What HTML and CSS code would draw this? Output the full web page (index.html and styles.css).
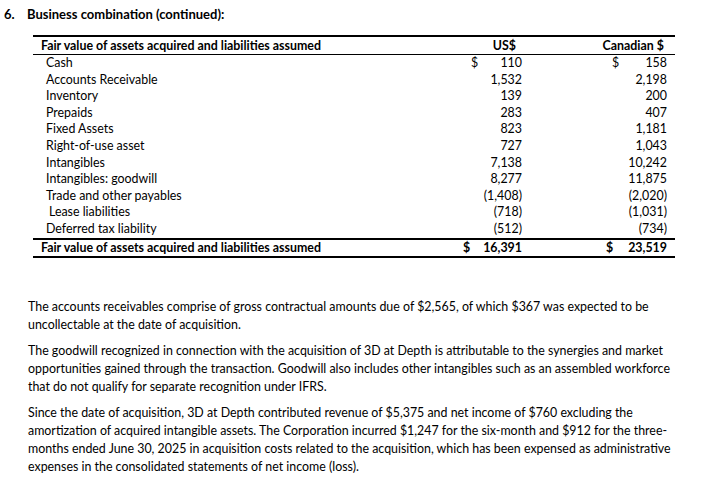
FILE: index.html
```html
<!DOCTYPE html>
<html>
<head>
<meta charset="utf-8">
<link rel="stylesheet" href="styles.css">
</head>
<body>
<div class="page">
  <h1 class="title"><span class="num">6.</span><span>Business combination (continued):</span></h1>
  <div class="table">
    <div class="row head">
      <div class="label">Fair value of assets acquired and liabilities assumed</div>
      <div class="hcell us">US$</div>
      <div class="hcell ca">Canadian $</div>
    </div>
    <div class="body">
      <div class="row"><div class="label item">Cash</div><div class="cell us"><span class="cur">$</span><span>110</span></div><div class="cell ca"><span class="cur">$</span><span>158</span></div></div>
      <div class="row"><div class="label item">Accounts Receivable</div><div class="cell us"><span></span><span>1,532</span></div><div class="cell ca"><span></span><span>2,198</span></div></div>
      <div class="row"><div class="label item">Inventory</div><div class="cell us"><span></span><span>139</span></div><div class="cell ca"><span></span><span>200</span></div></div>
      <div class="row"><div class="label item">Prepaids</div><div class="cell us"><span></span><span>283</span></div><div class="cell ca"><span></span><span>407</span></div></div>
      <div class="row"><div class="label item">Fixed Assets</div><div class="cell us"><span></span><span>823</span></div><div class="cell ca"><span></span><span>1,181</span></div></div>
      <div class="row"><div class="label item">Right-of-use asset</div><div class="cell us"><span></span><span>727</span></div><div class="cell ca"><span></span><span>1,043</span></div></div>
      <div class="row"><div class="label item">Intangibles</div><div class="cell us"><span></span><span>7,138</span></div><div class="cell ca"><span></span><span>10,242</span></div></div>
      <div class="row"><div class="label item">Intangibles: goodwill</div><div class="cell us"><span></span><span>8,277</span></div><div class="cell ca"><span></span><span>11,875</span></div></div>
      <div class="row"><div class="label item">Trade and other payables</div><div class="cell us"><span></span><span>(1,408)</span></div><div class="cell ca"><span></span><span>(2,020)</span></div></div>
      <div class="row"><div class="label item lease">Lease liabilities</div><div class="cell us"><span></span><span>(718)</span></div><div class="cell ca"><span></span><span>(1,031)</span></div></div>
      <div class="row"><div class="label item">Deferred tax liability</div><div class="cell us"><span></span><span>(512)</span></div><div class="cell ca"><span></span><span>(734)</span></div></div>
    </div>
    <div class="row total">
      <div class="label">Fair value of assets acquired and liabilities assumed</div>
      <div class="cell us"><span class="cur">$</span><span>16,391</span></div>
      <div class="cell ca"><span class="cur">$</span><span>23,519</span></div>
    </div>
  </div>
  <div class="notes">
    <p>The accounts receivables comprise of gross contractual amounts due of $2,565, of which $367 was expected to be uncollectable at the date of acquisition.</p>
    <p>The goodwill recognized in connection with the acquisition of 3D at Depth is attributable to the synergies and market opportunities gained through the transaction. Goodwill also includes other intangibles such as an assembled workforce that do not qualify for separate recognition under IFRS.</p>
    <p>Since the date of acquisition, 3D at Depth contributed revenue of $5,375 and net income of $760 excluding the amortization of acquired intangible assets. The Corporation incurred $1,247 for the six-month and $912 for the three-months ended June 30, 2025 in acquisition costs related to the acquisition, which has been expensed as administrative expenses in the consolidated statements of net income (loss).</p>
  </div>
</div>
</body>
</html>
```
FILE: styles.css
```css
* { box-sizing: border-box; }
html, body { margin: 0; padding: 0; background: #fff; }
body {
  font-family: Lato, "Open Sans", sans-serif;
  color: #000;
  font-size: 12.4px;
}
.page { padding: 6px 0 0 4px; }
.title {
  display: flex;
  margin: 0;
  font-size: 13px;
  font-weight: bold;
  line-height: 16px;
}
.title .num { width: 23px; }
.table {
  margin: 13px 0 0 29px;
  width: 642px;
  border-top: 2px solid #000;
}
.row {
  display: grid;
  grid-template-columns: 1fr 89px 55px 90px;
  height: 16.6px;
  line-height: 16.6px;
  align-items: center;
}
.row .us { grid-column: 2; }
.row .ca { grid-column: 4; }
.head { height: 18px; line-height: 18px; border-bottom: 1px solid #000; font-weight: bold; }
.label { padding-left: 8px; white-space: nowrap; }
.item { padding-left: 13px; }
.item.lease { padding-left: 16px; }
.hcell { text-align: right; }
.hcell.us { padding-right: 14px; }
.hcell.ca { padding-right: 11px; }
.cell {
  display: flex;
  justify-content: space-between;
  padding: 0 8px 0 30px;
}
.cell.ca { padding-left: 27px; }
.total {
  border-top: 2px solid #000;
  border-bottom: 2px solid #000;
  font-weight: bold;
  height: 20px;
  line-height: 16px;
}
.total .cell.us { padding-left: 22px; }
.total .cell.ca { padding-left: 21px; }
.notes { margin: 40px 0 0 24px; width: 660px; }
.notes p { margin: 0 0 8px 0; line-height: 18px; }
```
